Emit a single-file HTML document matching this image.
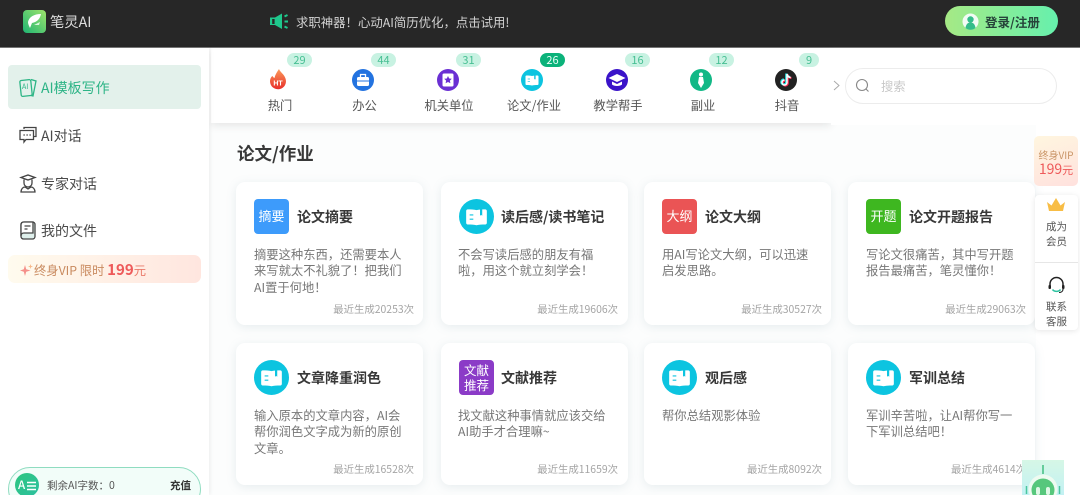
<!DOCTYPE html>
<html lang="zh"><head><meta charset="utf-8"><title>笔灵AI</title>
<style>
*{box-sizing:border-box;margin:0;padding:0}
html,body{width:1080px;height:495px;overflow:hidden;background:#fff;font-family:"Noto Sans CJK SC","Liberation Sans",sans-serif;color:#444}
.a{position:absolute;white-space:nowrap}
#page{position:relative;width:1080px;height:495px;overflow:hidden;background:#fff}
.hdr{left:0;top:0;width:1080px;height:48px;background:#272727;border-bottom:1px solid #777}
.side{left:0;top:48px;width:209px;height:447px;background:#fff;box-shadow:1px 0 4px rgba(0,0,0,.07);z-index:2}
.mi{font-size:14px;line-height:20px;color:#4a4a4a;left:41px}
.nav{left:211px;top:48px;width:620px;height:75px;background:#fff;box-shadow:0 3px 8px rgba(0,0,0,.09)}
.nt{font-size:12.3px;line-height:16px;color:#555;transform:translateX(-50%);top:97px}
.bd{height:14px;width:25px;border-radius:7px;background:#c8f2e2;color:#47bf93;font-size:11px;line-height:14px;text-align:center;top:53px}
.ic{width:22px;height:22px;top:69px}
.card{width:187px;height:143px;background:#fff;border-radius:9px;box-shadow:0 2px 10px rgba(120,150,160,.16)}
.sq{width:35px;height:35px;border-radius:4px;color:#fff;text-align:center;font-size:13px;line-height:34px;left:18px;top:17px;font-weight:400}
.ci{left:18px;top:17px}
.ti{left:61px;top:25px;font-size:14px;line-height:20px;font-weight:700;color:#383838}
.ds{left:18px;top:63.500px;font-size:12.3px;line-height:16.7px;color:#777}
.ft{right:9px;top:120px;font-size:10.4px;line-height:14px;color:#a4a4a4}
</style></head><body><div id="page">

<div class="a" style="left:0;top:123px;width:1080px;height:372px;background:#fcfdfd"></div>
<div class="a" style="left:1036px;top:125px;width:44px;height:370px;background:#fff"></div>

<div class="a hdr"></div>
<svg class="a" style="left:23px;top:10px" width="24" height="24" viewBox="0 0 24 24"><defs><linearGradient id="lg" x1="0" y1="1" x2="1" y2="0"><stop offset="0" stop-color="#1fb573"/><stop offset="1" stop-color="#9ee46b"/></linearGradient></defs><rect width="23" height="23" rx="4" fill="url(#lg)"/><path d="M5 12C6 7 11 4 18 4 17 9 14 12 9 13L7 18C6 16 5 14 5 12Z" fill="#fff"/><path d="M11 15l6-3-1 3z" fill="#d9f7df"/></svg>
<div class="a" style="left:50px;top:12px;font-size:14.3px;line-height:20px;color:#dcdcdc">笔灵AI</div>
<svg class="a" style="left:270px;top:13px" width="19" height="17" viewBox="0 0 19 17"><path d="M0 4.500h5l7-4v15.500l-7-4H0z" fill="#1fc78c"/><rect x="2.200" y="6" width="2.400" height="5" fill="#272727"/><path d="M14.500 3.500l3-1.500M14.500 8.500h3.500M14.500 13.500l3 1.500" stroke="#1fc78c" stroke-width="2" fill="none"/></svg>
<div class="a" style="left:296px;top:13px;font-size:12.4px;line-height:18px;color:#d2d2d2">求职神器！心动AI简历优化，点击试用!</div>
<div class="a" style="left:945px;top:6px;width:113px;height:30px;border-radius:15px;background:linear-gradient(90deg,#a6e985,#66f0ad)"></div>
<svg class="a" style="left:962px;top:13px" width="17" height="17" viewBox="0 0 17 17"><circle cx="8.500" cy="8.500" r="8" fill="#f2fbf5"/><circle cx="8.500" cy="6.500" r="3.200" fill="#34bd8a"/><path d="M3.500 15c.5-4 2.500-5.500 5-5.500s4.500 1.500 5 5.500a8 8 0 0 1-10 0z" fill="#34bd8a"/></svg>
<div class="a" style="left:985px;top:13px;font-size:12.5px;line-height:18px;font-weight:700;color:#26433a">登录/注册</div>

<div class="a side"></div>
<div style="position:absolute;left:0;top:0;z-index:3">
<div class="a" style="left:8px;top:65px;width:193px;height:44px;border-radius:4px;background:#e3f1eb"></div>
<svg class="a" style="left:19px;top:78px" width="18" height="20" viewBox="0 0 18 20" fill="none" stroke="#2cb585" stroke-width="1.300"><path d="M12 1.500l5 1.500-3 15-2-.5"/><rect x="1.500" y="2" width="11" height="16" rx="1.500" transform="rotate(-6 7 10)"/></svg>
<div class="a" style="left:22px;top:82px;font-size:7px;line-height:10px;color:#2cb585">AI</div>
<div class="a mi" style="top:78px;color:#2db486">AI模板写作</div>

<svg class="a" style="left:19px;top:126px" width="18" height="18" viewBox="0 0 18 18" fill="none" stroke="#444" stroke-width="1.300"><path d="M5 3V1.500h12v9h-2"/><path d="M1 4.500h13.500v9H7l-2 2.500v-2.500H1z"/><path d="M4.500 9h1.200M7.500 9h1.200M10.500 9h1.200" stroke-width="1.400"/></svg>
<div class="a mi" style="top:126px">AI对话</div>

<svg class="a" style="left:19px;top:174px" width="18" height="19" viewBox="0 0 18 19" fill="none" stroke="#444" stroke-width="1.300"><path d="M2 3.500L9 1l7 2.500L9 6z"/><path d="M5 5.500V9a4 4 0 0 0 8 0V5.500"/><path d="M2 18c0-3 2-5 4-5l3 2 3-2c2 0 4 2 4 5z"/></svg>
<div class="a mi" style="top:174px">专家对话</div>

<svg class="a" style="left:20px;top:221px" width="16" height="19" viewBox="0 0 16 19" fill="none" stroke="#444" stroke-width="1.300"><rect x="1" y="1" width="14" height="17" rx="2.500" fill="#dff0ec"/><path d="M1 4q0-3 3-3h9v11H4q-3 0-3 3z" fill="#fff"/><path d="M4.500 5h6M4.500 8h3"/></svg>
<div class="a mi" style="top:221px">我的文件</div>

<div class="a" style="left:8px;top:255px;width:193px;height:28px;border-radius:7px;background:linear-gradient(90deg,#fffbee,#ffe6df)"></div>
<svg class="a" style="left:20px;top:263px" width="13" height="14" viewBox="0 0 13 14"><path d="M5 2l1.200 4.300L10.500 7.500 6.200 8.700 5 13 3.800 8.700 0 7.500l3.800-1.200z" fill="#f5908a"/><path d="M10.500 1l.6 1.900 1.900.6-1.900.6-.6 1.900-.6-1.900L8 3.500l1.900-.6z" fill="#f8b98a"/></svg>
<div class="a" style="left:34px;top:261px;font-size:12.3px;line-height:18px;color:#c98a5f">终身VIP 限时 <span style="font-size:15px;font-weight:700;color:#ee5a5a">199</span><span style="color:#ea7a6a">元</span></div>

<div class="a" style="left:8px;top:467px;width:193px;height:44px;border-radius:22px;background:#f2fdf9;border:1px solid #8fdcc0"></div>
<div class="a" style="left:15px;top:473px;width:24px;height:24px;border-radius:12px;background:linear-gradient(135deg,#2fc57f,#2cc0a0)"></div>
<div class="a" style="left:18px;top:476px;font-size:11.5px;line-height:18px;font-weight:500;color:#fff">A</div>
<svg class="a" style="left:27px;top:481px" width="9" height="10"><path d="M0 1.500h9M0 5h9M0 8.500h9" stroke="#fff" stroke-width="1.600"/></svg>
<div class="a" style="left:47px;top:478px;font-size:10.5px;line-height:16px;color:#555">剩余AI字数：0</div>
<div class="a" style="left:170px;top:478px;font-size:10.5px;line-height:16px;font-weight:700;color:#333">充值</div>
</div>

<div class="a nav"></div>
<div class="a" style="left:831px;top:48px;width:249px;height:77px;background:#fff"></div>

<div class="a bd" style="left:287px">29</div>
<div class="a bd" style="left:371px">44</div>
<div class="a bd" style="left:456px">31</div>
<div class="a bd" style="left:540px;background:#0bb27a;color:#e8fff6">26</div>
<div class="a bd" style="left:625px">16</div>
<div class="a bd" style="left:709px">12</div>
<div class="a bd" style="left:799px;width:20px">9</div>

<svg class="a ic" style="left:268px;top:69px" width="22" height="22" viewBox="0 0 22 22"><defs><linearGradient id="fl" x1="0" y1="0" x2="0" y2="1"><stop offset="0" stop-color="#fb9a5a"/><stop offset="1" stop-color="#e8302b"/></linearGradient></defs><path d="M11 0c1 3 5 5 6.500 9.500a8 8 0 1 1-15.500 3c0-2.500 1-4.500 2.500-5.500 .5 1 1 1.500 2 2C7 6 9 3 11 0z" fill="url(#fl)"/><text x="10" y="16.500" text-anchor="middle" font-size="7" font-weight="700" fill="#fff" font-family="Liberation Sans">HT</text></svg>
<svg class="a ic" style="left:352px" viewBox="0 0 22 22"><circle cx="11" cy="11" r="11" fill="#2373e0"/><rect x="5" y="8" width="12" height="9" rx="1.500" fill="#fff"/><path d="M8.500 8V5.500h5V8" fill="none" stroke="#fff" stroke-width="1.300"/><path d="M5 12h12" stroke="#2373e0"/></svg>
<svg class="a ic" style="left:437px" viewBox="0 0 22 22"><circle cx="11" cy="11" r="11" fill="#6a2fd3"/><rect x="5.500" y="4.500" width="11" height="13" rx="1.500" fill="#fff"/><path d="M11 7l1.200 2.500 2.600.3-1.900 1.800.5 2.600L11 13l-2.400 1.200.5-2.600-1.900-1.800 2.600-.3z" fill="#6a2fd3"/></svg>
<svg class="a ic" style="left:521px" viewBox="0 0 22 22"><use href="#bk"/></svg>
<svg class="a ic" style="left:606px" viewBox="0 0 22 22"><circle cx="11" cy="11" r="11" fill="#3a13c9"/><path d="M2.500 9L11 5l8.500 4L11 13z" fill="#fff"/><path d="M6 12.500v3c2 2 8 2 10 0v-3L11 15z" fill="#fff"/></svg>
<svg class="a ic" style="left:690px" viewBox="0 0 22 22"><circle cx="11" cy="11" r="11" fill="#12b886"/><circle cx="11" cy="5.500" r="2" fill="#fff"/><path d="M9 8h4l1 6-3 5-3-5z" fill="#fff"/></svg>
<svg class="a ic" style="left:775px" viewBox="0 0 22 22"><circle cx="11" cy="11" r="11" fill="#222"/><path d="M12 5v8.500a2.500 2.500 0 1 1-2.500-2.500M12 5c.3 2 1.700 3.300 3.700 3.500" fill="none" stroke="#ff2d55" stroke-width="2.200" transform="translate(.7 .5)"/><path d="M12 5v8.500a2.500 2.500 0 1 1-2.500-2.500M12 5c.3 2 1.700 3.300 3.700 3.500" fill="none" stroke="#2ee8e8" stroke-width="2.200" transform="translate(-.7 -.5)"/><path d="M12 5v8.500a2.500 2.500 0 1 1-2.500-2.500M12 5c.3 2 1.700 3.300 3.700 3.500" fill="none" stroke="#fff" stroke-width="1.500"/></svg>

<div class="a nt" style="left:280px">热门</div>
<div class="a nt" style="left:364.500px">办公</div>
<div class="a nt" style="left:449px">机关单位</div>
<div class="a nt" style="left:534px">论文/作业</div>
<div class="a nt" style="left:618px">教学帮手</div>
<div class="a nt" style="left:703px">副业</div>
<div class="a nt" style="left:787px">抖音</div>

<svg class="a" style="left:833px;top:80px" width="7" height="11"><path d="M1 1l5 4.500L1 10" fill="none" stroke="#aaa" stroke-width="1"/></svg>
<div class="a" style="left:845px;top:68px;width:212px;height:36px;border-radius:18px;border:1px solid #ececec;background:#fff"></div>
<svg class="a" style="left:855px;top:78px" width="15" height="15" viewBox="0 0 15 15" fill="none" stroke="#888" stroke-width="1.100"><circle cx="7" cy="7" r="5.500"/><path d="M11 11l2.500 2.500"/></svg>
<div class="a" style="left:881px;top:77px;font-size:12.3px;line-height:18px;color:#c8c8c8">搜索</div>

<div class="a" style="left:237px;top:141px;font-size:17.500px;line-height:26px;font-weight:700;color:#383838">论文/作业</div>

<div class="a card" style="left:236px;top:182px">
<div class="a sq" style="background:#3d9bfb">摘要</div>
<div class="a ti">论文摘要</div>
<div class="a ds">摘要这种东西，还需要本人<br>来写就太不礼貌了！把我们<br>AI置于何地！</div>
<div class="a ft" style="top:120px">最近生成20253次</div></div>

<div class="a card" style="left:441px;top:182px">
<svg class="a ci" width="35" height="35" viewBox="0 0 22 22"><use href="#bk"/></svg>
<div class="a ti" style="left:60px">读后感/读书笔记</div>
<div class="a ds" style="left:17px">不会写读后感的朋友有福<br>啦，用这个就立刻学会！</div>
<div class="a ft" style="top:120px;right:10px">最近生成19606次</div></div>

<div class="a card" style="left:644px;top:182px">
<div class="a sq" style="background:#ea5455">大纲</div>
<div class="a ti">论文大纲</div>
<div class="a ds">用AI写论文大纲，可以迅速<br>启发思路。</div>
<div class="a ft" style="top:120px">最近生成30527次</div></div>

<div class="a card" style="left:848px;top:182px">
<div class="a sq" style="background:#3eb720">开题</div>
<div class="a ti">论文开题报告</div>
<div class="a ds">写论文很痛苦，其中写开题<br>报告最痛苦，笔灵懂你！</div>
<div class="a ft" style="top:120px">最近生成29063次</div></div>

<div class="a card" style="left:236px;top:343px;height:142px">
<svg class="a ci" width="35" height="35" viewBox="0 0 22 22"><use href="#bk"/></svg>
<div class="a ti">文章降重润色</div>
<div class="a ds">输入原本的文章内容，AI会<br>帮你润色文字成为新的原创<br>文章。</div>
<div class="a ft" style="top:119px">最近生成16528次</div></div>

<div class="a card" style="left:441px;top:343px;height:142px">
<div class="a sq" style="background:#8b3bc7;line-height:15px;padding-top:2px;font-size:12.500px;white-space:normal">文献<br>推荐</div>
<div class="a ti" style="left:60px">文献推荐</div>
<div class="a ds" style="left:17px">找文献这种事情就应该交给<br>AI助手才合理嘛~</div>
<div class="a ft" style="right:10px;top:119px">最近生成11659次</div></div>

<div class="a card" style="left:644px;top:343px;height:142px">
<svg class="a ci" width="35" height="35" viewBox="0 0 22 22"><use href="#bk"/></svg>
<div class="a ti">观后感</div>
<div class="a ds">帮你总结观影体验</div>
<div class="a ft" style="top:119px">最近生成8092次</div></div>

<div class="a card" style="left:848px;top:343px;height:142px">
<svg class="a ci" width="35" height="35" viewBox="0 0 22 22"><use href="#bk"/></svg>
<div class="a ti">军训总结</div>
<div class="a ds">军训辛苦啦，让AI帮你写一<br>下军训总结吧！</div>
<div class="a ft" style="top:119px">最近生成4614次</div></div>

<svg width="0" height="0" style="position:absolute"><defs><g id="bk"><circle cx="11" cy="11" r="11" fill="#0cc4e0"/><path d="M5.500 6.500c2 0 4 .1 5.500 .5 1.500-.4 3.500-.5 5.500-.5 .6 0 1 .4 1 1v7.500c0 .6-.4 1-1 1-2 0-4 .1-5.500 .5-1.500-.4-3.500-.5-5.500-.5-.6 0-1-.4-1-1V7.500c0-.6.400-1 1-1z" fill="#fff"/><path d="M6.700 10h2.300M6.700 12.700h2.300" stroke="#0cc4e0" stroke-width=".7"/><path d="M13.200 6.200v4.300l.7-.5.700.5V6.200z" fill="#0cc4e0"/></g></defs></svg>

<div class="a" style="left:1034px;top:136px;width:44px;height:50px;border-radius:5px;background:linear-gradient(160deg,#fff6df,#ffe1de)"></div>
<div class="a" style="left:1034px;top:148px;width:44px;text-align:center;font-size:10px;line-height:13px;color:#c99466">终身VIP</div>
<div class="a" style="left:1034px;top:160px;width:44px;text-align:center;font-size:14px;line-height:19px;color:#ee5a5a">199<span style="font-size:11px">元</span></div>
<div class="a" style="left:1035px;top:195px;width:43px;height:135px;background:#fff;border-radius:4px;box-shadow:0 1px 6px rgba(0,0,0,.1)"></div>
<div class="a" style="left:1035px;top:262px;width:43px;height:1px;background:#e6e6e6"></div>
<svg class="a" style="left:1046px;top:197px" width="20" height="15" viewBox="0 0 20 15"><path d="M1 5l4.500 3.500L10 1l4.500 7.500L19 5l-2 9H3z" fill="#f8bd45"/></svg>
<div class="a" style="left:1035px;top:219px;width:43px;text-align:center;font-size:10.500px;line-height:15px;color:#555;white-space:normal">成为<br>会员</div>
<svg class="a" style="left:1047px;top:276px" width="19" height="19" viewBox="0 0 19 19" fill="none"><path d="M3 11V8a6.500 6.500 0 0 1 13 0v3" stroke="#222" stroke-width="1.500"/><rect x="1.500" y="9" width="2.500" height="4" rx="1" fill="#222"/><rect x="15" y="9" width="2.500" height="4" rx="1" fill="#222"/><path d="M5.500 13.500c2 2.500 6 2.500 8 0" stroke="#2dc2a0" stroke-width="1.500"/><path d="M16 13c0 2.500-2 3.500-4 3.500" stroke="#222" stroke-width="1.100"/></svg>
<div class="a" style="left:1035px;top:299px;width:43px;text-align:center;font-size:10.500px;line-height:15px;color:#555;white-space:normal">联系<br>客服</div>

<div class="a" style="left:1022px;top:460px;width:42px;height:35px;background:linear-gradient(180deg,#d6f7e6,#c2f1f3)"></div>
<svg class="a" style="left:1021px;top:460px" width="43" height="35" viewBox="0 0 43 35"><path d="M22 5v9" stroke="#2cb56f" stroke-width="1.300"/><circle cx="22" cy="29" r="14.500" fill="#eefbf1"/><circle cx="22" cy="30" r="11.500" fill="#57c77c"/><path d="M5.500 26v8M38.500 26v8" stroke="#4bc6a0" stroke-width="1.500"/><rect x="15" y="27" width="4" height="8" rx="2" fill="#dff8e6"/><rect x="25" y="27" width="4" height="8" rx="2" fill="#dff8e6"/></svg>

</div></body></html>
